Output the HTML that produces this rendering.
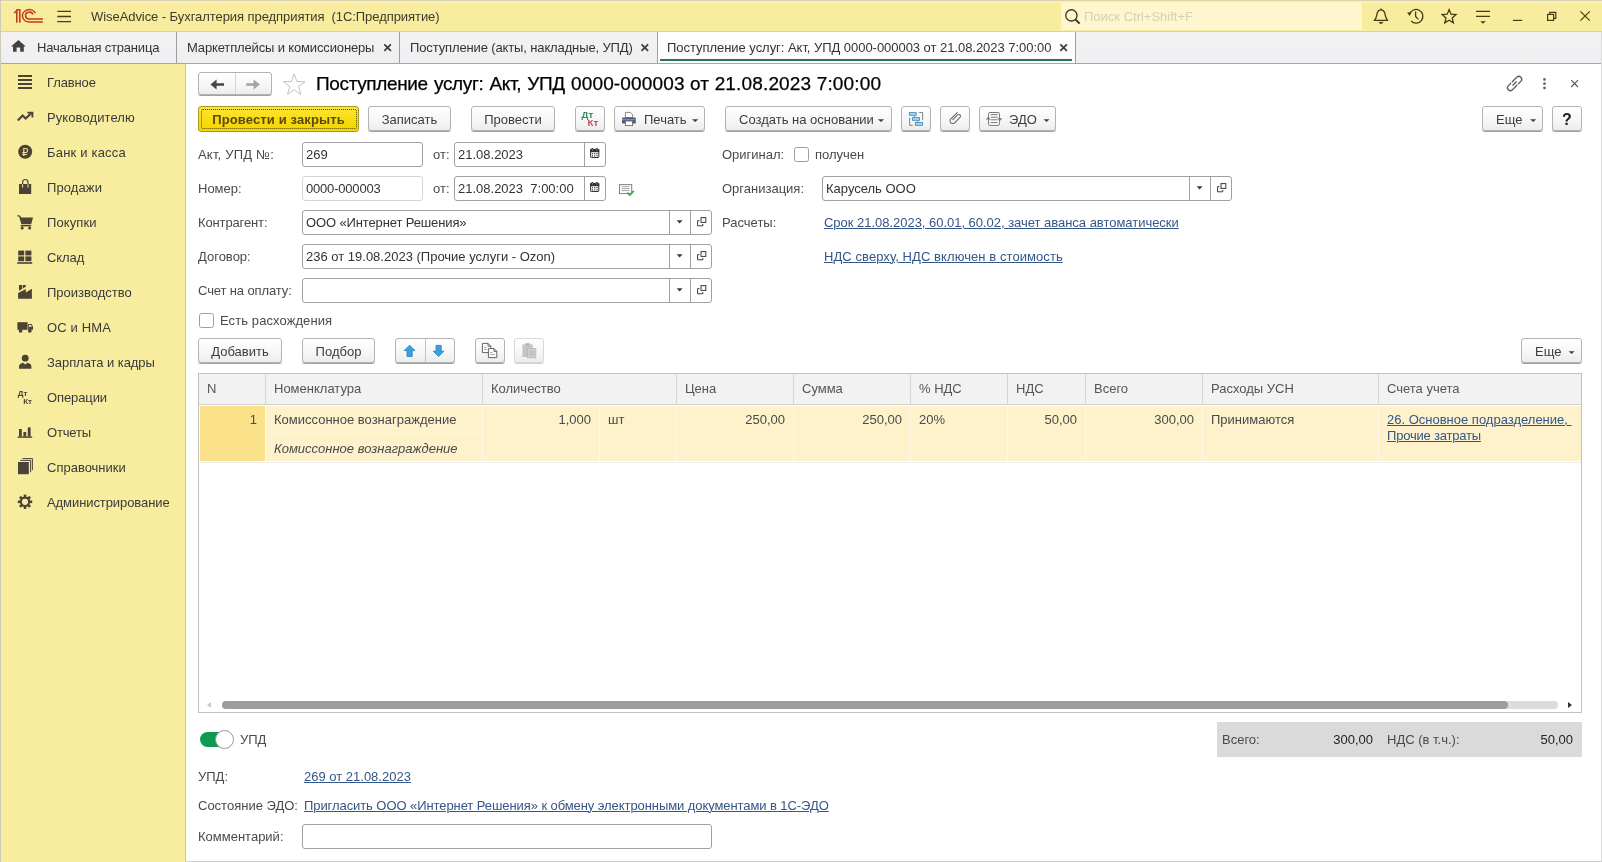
<!DOCTYPE html>
<html lang="ru">
<head>
<meta charset="utf-8">
<title>WiseAdvice - Бухгалтерия предприятия (1С:Предприятие)</title>
<style>
*{box-sizing:border-box;margin:0;padding:0}
html,body{width:1602px;height:862px;overflow:hidden;background:#fff}
body{font-family:"Liberation Sans",Arial,sans-serif;font-size:13px;color:#333;position:relative;will-change:transform}
.abs{position:absolute}
.t{position:absolute;white-space:nowrap;line-height:16px;height:16px}
svg{position:absolute;overflow:visible}
/* title bar */
#titlebar{position:absolute;left:0;top:0;width:1602px;height:31px;background:#f8ec9f;border-top:1px solid #f3e9b4}
#search{position:absolute;left:1061px;top:3px;width:301px;height:27px;background:#fdf6cf}
/* tabs */
#tabbar{position:absolute;left:0;top:31px;width:1602px;height:33px;background:linear-gradient(#f4f1f1,#efeff1);border-top:1px solid #d9d3ad;border-bottom:1px solid #a6a6a6}
.tabsep{position:absolute;top:32px;width:1px;height:31px;background:#9e9e9e}
/* sidebar */
#sidebar{position:absolute;left:0;top:64px;width:185px;height:798px;background:#f8ec9f;border-left:1px solid #d9d09a}
#sideedge{position:absolute;left:185px;top:64px;width:1px;height:798px;background:#cfc792}
.nav{position:absolute;left:47px;white-space:nowrap;line-height:16px;color:#3a3a3a}
/* buttons */
.btn{position:absolute;height:25px;border:1px solid #b3b3b3;border-radius:3px;background:linear-gradient(#ffffff,#f5f5f5 65%,#ececec);box-shadow:0 1px 0 #a2a2a2;text-align:center;line-height:25px;white-space:nowrap;color:#3c3c3c}
.inp{position:absolute;height:25px;border:1px solid #a0a0a0;border-radius:3px;background:#fff;line-height:23px;padding-left:3px;white-space:nowrap;color:#333}
.inp.ro{border-color:#d5d5d5}
.lbl{position:absolute;white-space:nowrap;line-height:16px;color:#4a4a4a}
.lnk{position:absolute;white-space:nowrap;line-height:16px;color:#355689;text-decoration:underline;text-underline-offset:1.4px;text-decoration-thickness:1px}
.colsep{top:374px;width:1px;height:87px;background:linear-gradient(#d4d4d4 0,#d4d4d4 30px,#cfcfcf 30px,#cfcfcf 31px,#fff 31px,#fff 32px,#fff9e4 32px)}
.th{color:#555}
.cb{position:absolute;width:15px;height:15px;border:1px solid #9e9e9e;border-radius:2.5px;background:#fff}
</style>
</head>
<body>
<!-- ===== TITLE BAR ===== -->
<div id="titlebar"></div>
<div id="search"></div>
<div class="t" style="left:91px;top:9px;font-size:13px;color:#3d3a2a;letter-spacing:-0.065px">WiseAdvice - Бухгалтерия предприятия&nbsp; (1С:Предприятие)</div>
<div class="t" style="left:1084px;top:9px;font-size:13px;color:#d6d1b6">Поиск Ctrl+Shift+F</div>

<div class="abs" style="left:0;top:0;width:1602px;height:1px;background:#d8d2ae"></div>
<div class="abs" style="left:0;top:1px;width:1602px;height:2px;background:#fbf1b2"></div>
<!-- ===== TAB BAR ===== -->
<div id="tabbar"></div>
<div class="abs" style="left:658px;top:32px;width:417px;height:31px;background:#fdfdfd"></div>
<div class="tabsep" style="left:176px"></div>
<div class="tabsep" style="left:399px"></div>
<div class="tabsep" style="left:657px"></div>
<div class="tabsep" style="left:1075px"></div>
<div class="abs" style="left:660px;top:59px;width:412px;height:2px;background:#2a7556"></div>
<div class="t" style="left:37px;top:40px;color:#333;letter-spacing:-0.2px">Начальная страница</div>
<div class="t" style="left:187px;top:40px;color:#333;letter-spacing:-0.145px">Маркетплейсы и комиссионеры</div>
<div class="t" style="left:410px;top:40px;color:#333;letter-spacing:-0.13px">Поступление (акты, накладные, УПД)</div>
<div class="t" style="left:667px;top:40px;color:#333;letter-spacing:-0.04px">Поступление услуг: Акт, УПД 0000-000003 от 21.08.2023 7:00:00</div>

<!-- ===== SIDEBAR ===== -->
<div id="sidebar"></div>
<div id="sideedge"></div>
<div class="nav" style="top:75px;letter-spacing:-0.12px">Главное</div>
<div class="nav" style="top:110px;letter-spacing:0.09px">Руководителю</div>
<div class="nav" style="top:145px;letter-spacing:0.2px">Банк и касса</div>
<div class="nav" style="top:180px;letter-spacing:0.1px">Продажи</div>
<div class="nav" style="top:215px;letter-spacing:0.11px">Покупки</div>
<div class="nav" style="top:250px;letter-spacing:-0.09px">Склад</div>
<div class="nav" style="top:285px">Производство</div>
<div class="nav" style="top:320px;letter-spacing:0.16px">ОС и НМА</div>
<div class="nav" style="top:355px;letter-spacing:-0.06px">Зарплата и кадры</div>
<div class="nav" style="top:390px;letter-spacing:-0.1px">Операции</div>
<div class="nav" style="top:425px;letter-spacing:-0.19px">Отчеты</div>
<div class="nav" style="top:460px">Справочники</div>
<div class="nav" style="top:495px;letter-spacing:-0.08px">Администрирование</div>

<div class="abs" style="left:1601px;top:32px;width:1px;height:830px;background:#dcdcdc"></div>
<div class="abs" style="left:186px;top:861px;width:1416px;height:1px;background:#cfcfcf"></div>
<!-- ===== MAIN ===== -->
<!-- header -->
<div class="btn" style="left:198px;top:72px;width:74px;height:23px"></div>
<div class="abs" style="left:235px;top:73px;width:1px;height:21px;background:#d4d4d4"></div>
<div class="t" style="left:316px;top:72px;font-size:19px;line-height:24px;height:24px;color:#000;-webkit-text-stroke:0.25px #000"><span style="letter-spacing:-0.36px;word-spacing:1.24px">Поступление услуг: Акт, УПД </span><span style="letter-spacing:0.15px">0000-000003 от 21.08.2023 7:00:00</span></div>

<!-- toolbar -->
<div class="btn" style="left:198px;top:106px;width:161px;height:26px;background:linear-gradient(#fbe53a,#f9dd10 50%,#f3d302);border-color:#a99b1e;box-shadow:none;font-weight:bold;color:#574a10;letter-spacing:0.125px">Провести и закрыть</div>
<div class="abs" style="left:201px;top:109px;width:156px;height:20px;border:1px dotted #4e450c;border-radius:2px"></div>
<div class="btn" style="left:368px;top:106px;width:83px">Записать</div>
<div class="btn" style="left:471px;top:106px;width:84px">Провести</div>
<div class="btn" style="left:575px;top:106px;width:30px"></div>
<div class="btn" style="left:614px;top:106px;width:91px;text-align:left;padding-left:29px">Печать</div>
<div class="btn" style="left:725px;top:106px;width:167px;text-align:left;padding-left:13px">Создать на основании</div>
<div class="btn" style="left:901px;top:106px;width:30px"></div>
<div class="btn" style="left:940px;top:106px;width:30px"></div>
<div class="btn" style="left:979px;top:106px;width:77px;text-align:left;padding-left:29px">ЭДО</div>
<div class="btn" style="left:1482px;top:106px;width:61px;text-align:left;padding-left:13px">Еще</div>
<div class="btn" style="left:1552px;top:106px;width:30px;font-weight:bold;font-size:16px;color:#1c1c1c">?</div>

<!-- form left -->
<div class="lbl" style="left:198px;top:147px;letter-spacing:0.2px">Акт, УПД №:</div>
<div class="inp" style="left:302px;top:142px;width:121px">269</div>
<div class="lbl" style="left:433px;top:147px">от:</div>
<div class="inp" style="left:454px;top:142px;width:152px">21.08.2023</div>
<div class="abs" style="left:584px;top:143px;width:1px;height:23px;background:#a0a0a0"></div>

<div class="lbl" style="left:198px;top:181px">Номер:</div>
<div class="inp ro" style="left:302px;top:176px;width:121px;letter-spacing:-0.195px">0000-000003</div>
<div class="lbl" style="left:433px;top:181px">от:</div>
<div class="inp" style="left:454px;top:176px;width:152px">21.08.2023&nbsp; 7:00:00</div>
<div class="abs" style="left:584px;top:177px;width:1px;height:23px;background:#a0a0a0"></div>

<div class="lbl" style="left:198px;top:215px;letter-spacing:-0.13px">Контрагент:</div>
<div class="inp" style="left:302px;top:210px;width:410px;letter-spacing:-0.128px">ООО «Интернет Решения»</div>
<div class="abs" style="left:669px;top:211px;width:1px;height:23px;background:#a0a0a0"></div>
<div class="abs" style="left:690px;top:211px;width:1px;height:23px;background:#a0a0a0"></div>

<div class="lbl" style="left:198px;top:249px">Договор:</div>
<div class="inp" style="left:302px;top:244px;width:410px">236 от 19.08.2023 (Прочие услуги - Ozon)</div>
<div class="abs" style="left:669px;top:245px;width:1px;height:23px;background:#a0a0a0"></div>
<div class="abs" style="left:690px;top:245px;width:1px;height:23px;background:#a0a0a0"></div>

<div class="lbl" style="left:198px;top:283px;letter-spacing:-0.115px">Счет на оплату:</div>
<div class="inp" style="left:302px;top:278px;width:410px"></div>
<div class="abs" style="left:669px;top:279px;width:1px;height:23px;background:#a0a0a0"></div>
<div class="abs" style="left:690px;top:279px;width:1px;height:23px;background:#a0a0a0"></div>

<div class="cb" style="left:199px;top:313px"></div>
<div class="lbl" style="left:220px;top:313px;letter-spacing:0.09px">Есть расхождения</div>

<!-- form right -->
<div class="lbl" style="left:722px;top:147px">Оригинал:</div>
<div class="cb" style="left:794px;top:147px"></div>
<div class="lbl" style="left:815px;top:147px">получен</div>
<div class="lbl" style="left:722px;top:181px">Организация:</div>
<div class="inp" style="left:822px;top:176px;width:410px">Карусель ООО</div>
<div class="abs" style="left:1189px;top:177px;width:1px;height:23px;background:#a0a0a0"></div>
<div class="abs" style="left:1210px;top:177px;width:1px;height:23px;background:#a0a0a0"></div>
<div class="lbl" style="left:722px;top:215px">Расчеты:</div>
<div class="lnk" style="left:824px;top:215px;letter-spacing:-0.025px">Срок 21.08.2023, 60.01, 60.02, зачет аванса автоматически</div>
<div class="lnk" style="left:824px;top:249px;letter-spacing:0.075px">НДС сверху, НДС включен в стоимость</div>
<!-- table toolbar -->
<div class="btn" style="left:198px;top:338px;width:84px">Добавить</div>
<div class="btn" style="left:302px;top:338px;width:73px">Подбор</div>
<div class="btn" style="left:395px;top:338px;width:60px"></div>
<div class="abs" style="left:425px;top:339px;width:1px;height:23px;background:#c4c4c4"></div>
<div class="btn" style="left:475px;top:338px;width:30px"></div>
<div class="btn" style="left:514px;top:338px;width:30px;border-color:#d8d8d8;box-shadow:0 1px 0 #d0d0d0"></div>
<div class="btn" style="left:1521px;top:338px;width:61px;text-align:left;padding-left:13px">Еще</div>

<!-- table -->
<div class="abs" style="left:198px;top:373px;width:1384px;height:340px;border:1px solid #c3c3c3;background:#fff"></div>
<div class="abs" style="left:199px;top:374px;width:1382px;height:30px;background:#f2f2f2"></div>
<div class="abs" style="left:199px;top:404px;width:1382px;height:1px;background:#cfcfcf"></div>
<div class="abs" style="left:200px;top:406px;width:1381px;height:55px;background:#fdf2cc"></div>
<div class="abs" style="left:200px;top:406px;width:65px;height:55px;background:#fbe28a"></div>
<div class="abs" style="left:199px;top:462px;width:1382px;height:1px;background:#ededed"></div>
<div class="abs" style="left:266px;top:433px;width:216px;height:1px;background:#fef7dd"></div>
<!-- col separators -->
<div class="abs colsep" style="left:265px"></div>
<div class="abs colsep" style="left:482px"></div>
<div class="abs colsep" style="left:676px"></div>
<div class="abs colsep" style="left:793px"></div>
<div class="abs colsep" style="left:910px"></div>
<div class="abs colsep" style="left:1007px"></div>
<div class="abs colsep" style="left:1085px"></div>
<div class="abs colsep" style="left:1202px"></div>
<div class="abs colsep" style="left:1378px"></div>
<div class="abs" style="left:599px;top:406px;width:1px;height:55px;background:#fff9e4"></div>
<!-- header labels -->
<div class="lbl th" style="left:207px;top:381px">N</div>
<div class="lbl th" style="left:274px;top:381px">Номенклатура</div>
<div class="lbl th" style="left:491px;top:381px">Количество</div>
<div class="lbl th" style="left:685px;top:381px">Цена</div>
<div class="lbl th" style="left:802px;top:381px">Сумма</div>
<div class="lbl th" style="left:919px;top:381px">% НДС</div>
<div class="lbl th" style="left:1016px;top:381px">НДС</div>
<div class="lbl th" style="left:1094px;top:381px">Всего</div>
<div class="lbl th" style="left:1211px;top:381px">Расходы УСН</div>
<div class="lbl th" style="left:1387px;top:381px">Счета учета</div>
<!-- row -->
<div class="lbl td" style="left:199px;width:58px;text-align:right;top:412px">1</div>
<div class="lbl td" style="left:274px;top:412px">Комиссонное вознаграждение</div>
<div class="lbl td" style="left:274px;top:441px;font-style:italic">Комиссонное вознаграждение</div>
<div class="lbl td" style="left:483px;width:108px;text-align:right;top:412px">1,000</div>
<div class="lbl td" style="left:608px;top:412px">шт</div>
<div class="lbl td" style="left:678px;width:107px;text-align:right;top:412px">250,00</div>
<div class="lbl td" style="left:795px;width:107px;text-align:right;top:412px">250,00</div>
<div class="lbl td" style="left:919px;top:412px">20%</div>
<div class="lbl td" style="left:1008px;width:69px;text-align:right;top:412px">50,00</div>
<div class="lbl td" style="left:1086px;width:108px;text-align:right;top:412px">300,00</div>
<div class="lbl td" style="left:1211px;top:412px">Принимаются</div>
<div class="lnk" style="left:1387px;top:412px">26. Основное подразделение,&nbsp;</div>
<div class="lnk" style="left:1387px;top:428px;letter-spacing:-0.2px">Прочие затраты</div>
<!-- scrollbar -->
<div class="abs" style="left:222px;top:701px;width:1336px;height:8px;border-radius:4px;background:#dcdcdc"></div>
<div class="abs" style="left:222px;top:701px;width:1286px;height:8px;border-radius:4px;background:#9d9d9d"></div>
<div class="abs" style="left:207px;top:702px;width:0;height:0;border:3px solid transparent;border-right:4px solid #c9c9c9;border-left:0"></div>
<div class="abs" style="left:1568px;top:702px;width:0;height:0;border:3px solid transparent;border-left:4px solid #333;border-right:0"></div>

<!-- footer -->
<div class="abs" style="left:200px;top:732px;width:32px;height:15px;border-radius:8px;background:#0f9a52"></div>
<div class="abs" style="left:215px;top:730px;width:19px;height:19px;border-radius:10px;background:#fff;border:1px solid #9a9a9a"></div>
<div class="lbl" style="left:240px;top:732px">УПД</div>
<div class="abs" style="left:1217px;top:722px;width:365px;height:35px;background:#dadada"></div>
<div class="lbl" style="left:1222px;top:732px">Всего:</div>
<div class="lbl" style="left:1300px;width:73px;text-align:right;top:732px;color:#222">300,00</div>
<div class="lbl" style="left:1387px;top:732px">НДС (в т.ч.):</div>
<div class="lbl" style="left:1500px;width:73px;text-align:right;top:732px;color:#222">50,00</div>

<div class="lbl" style="left:198px;top:769px">УПД:</div>
<div class="lnk" style="left:304px;top:769px">269 от 21.08.2023</div>
<div class="lbl" style="left:198px;top:798px">Состояние ЭДО:</div>
<div class="lnk" style="left:304px;top:798px;letter-spacing:-0.078px">Пригласить ООО «Интернет Решения» к обмену электронными документами в 1С-ЭДО</div>
<div class="lbl" style="left:198px;top:829px">Комментарий:</div>
<div class="inp" style="left:302px;top:824px;width:410px;height:25px"></div>


<svg id="ico" width="1602" height="862" viewBox="0 0 1602 862" style="left:0;top:0;pointer-events:none">
<!-- 1C logo -->
<g fill="none" stroke="#c43a1b" stroke-width="1.6" stroke-linecap="butt">
  <path d="M14.2 13 L16.8 10.6 V22.7"/>
  <path d="M16.4 9.8 H19.8 V22.7"/>
  <path d="M35.4 13.2 A6.8 6.2 0 1 0 29.6 22 H42.9"/>
  <path d="M33 14.6 A3.8 3.45 0 1 0 29.7 19 H42.9"/>
</g>
<!-- hamburger title -->
<g stroke="#4a3f12" stroke-width="1.3">
  <path d="M57.3 11.4H71M57.3 16.5H71M57.3 21.6H71"/>
</g>
<!-- search icon -->
<g fill="none" stroke="#3e3720" stroke-width="1.35">
  <circle cx="1071.4" cy="15.4" r="5.6"/>
  <path d="M1075.6 19.6L1079.6 23.6" stroke-width="2"/>
</g>
<!-- bell -->
<g fill="none" stroke="#453c12" stroke-width="1.3" stroke-linejoin="round">
  <path d="M1374.3 20.3 H1387.7 C1385.2 18.6 1385.6 15 1384.6 12.6 C1383.9 10.6 1382.6 9.8 1381 9.8 C1379.4 9.8 1378.1 10.6 1377.4 12.6 C1376.4 15 1376.8 18.6 1374.3 20.3Z"/>
  <path d="M1378.8 22.3 H1383.2 L1381 23.9Z" fill="#453c12" stroke-width="0.6"/>
  <path d="M1381 8.6V9.8"/>
</g>
<!-- history -->
<g fill="none" stroke="#453c12" stroke-width="1.3">
  <path d="M1409.6 14.2 A6.8 6.8 0 1 1 1411.2 21"/>
  <path d="M1415.6 11.4 V16.4 L1418.4 19.4"/>
  <path d="M1407.2 12.2 L1411.6 12.6 L1409.4 16Z" fill="#453c12" stroke="none"/>
</g>
<!-- star -->
<path d="M1449.1 9.6 L1451.0 14.2 L1456.0 14.6 L1452.2 17.9 L1453.4 22.8 L1449.1 20.2 L1444.8 22.8 L1446.0 17.9 L1442.2 14.6 L1447.2 14.2Z" fill="none" stroke="#453c12" stroke-width="1.3" stroke-linejoin="miter"/>
<!-- filter lines -->
<g stroke="#453c12" stroke-width="1.3"><path d="M1476 11.4H1490M1476 16.4H1490"/></g>
<path d="M1480.2 21.2H1485.8L1483 23.8Z" fill="#453c12"/>
<!-- window controls -->
<g fill="none" stroke="#453c12" stroke-width="1.2">
  <path d="M1513 20.4H1522.2"/>
  <rect x="1547.6" y="14.4" width="6" height="6"/>
  <path d="M1549.8 14.4V12.4H1555.8V18.4H1553.6"/>
  <path d="M1580.4 11.4L1589.8 20.6M1589.8 11.4L1580.4 20.6"/>
</g>
<!-- home icon -->
<path d="M18.4 40 L25.8 46.4 H23.8 V51.8 H20.2 V47.6 H16.6 V51.8 H13 V46.4 H11 Z" fill="#424242"/>
<!-- tab close x -->
<g stroke="#3c3c3c" stroke-width="1.7" fill="none">
  <path d="M384.3 44.3L390.9 50.9M390.9 44.3L384.3 50.9"/>
  <path d="M641.5 44.3L648.1 50.9M648.1 44.3L641.5 50.9"/>
  <path d="M1060.3 44.3L1066.9 50.9M1066.9 44.3L1060.3 50.9"/>
</g>
<!-- ===== sidebar icons ===== -->
<g fill="#4a4336">
  <!-- main: 4 lines -->
  <rect x="18" y="75" width="14" height="2"/><rect x="18" y="79" width="14" height="2"/><rect x="18" y="83" width="14" height="2"/><rect x="18" y="87" width="14" height="2"/>
  <!-- ruble -->
  <circle cx="25.2" cy="151.8" r="7"/>
  <!-- bag -->
  <path d="M19 184H31.2V194H19Z"/>
  <!-- cart -->
  <path d="M19.4 217.4H33L31.2 224.2H21.4Z"/>
  <rect x="20.6" y="225" width="10.6" height="1.4"/>
  <circle cx="22.2" cy="228" r="1.5"/><circle cx="29.6" cy="228" r="1.5"/>
  <!-- warehouse -->
  <rect x="18.2" y="250.6" width="6" height="4.8"/><rect x="25.4" y="250.6" width="6" height="4.8"/>
  <rect x="18.2" y="256.4" width="6" height="4.8"/><rect x="25.4" y="256.4" width="6" height="4.8"/>
  <rect x="17.2" y="262.2" width="15" height="1.6"/>
  <!-- factory -->
  <path d="M18.1 298.8V293L25.8 289V292.6L31.9 288.7V298.8Z"/>
  <path d="M19 285H22.3V288.8L19 290.8Z"/><path d="M23 285H25.9V286.4L23 288.4Z"/>
  <!-- truck -->
  <path d="M17.4 322.2H27.6V329.8H17.4Z"/>
  <path d="M28.2 324H31.4L33 326.6V329.8H28.2Z"/>
  <circle cx="20.6" cy="330.8" r="1.9"/><circle cx="29.8" cy="330.8" r="1.9"/>
  <!-- person -->
  <circle cx="25.2" cy="358.2" r="3.4"/>
  <path d="M19 368.8V366.4C19 364.4 21 363.4 23 362.8L25.2 364.4L27.4 362.8C29.4 363.4 31.4 364.4 31.4 366.4V368.8Z"/>
  <!-- bar chart -->
  <rect x="17.6" y="436.4" width="14.6" height="1.4"/>
  <rect x="19" y="429" width="2.8" height="7.6"/><rect x="23.4" y="432" width="2.8" height="4.6"/><rect x="27.8" y="427.4" width="2.8" height="9.2"/>
  <!-- books -->
  <rect x="18" y="462" width="10.8" height="12.2"/>
</g>
<g fill="none" stroke="#4a4336">
  <!-- trend -->
  <path d="M17.8 120.4L22.6 115.6L25.6 118.6L31.2 113.2" stroke-width="2.1"/>
  <path d="M27.4 112.6H32.4V117.6" stroke-width="1.9"/>
  <!-- bag handle -->
  <path d="M22.6 186.6V182.4A2.6 2.8 0 0 1 28 182.4V186.6" stroke-width="1.2"/>
  <!-- cart handle -->
  <path d="M17.4 215.6L19.8 216.2L20.6 218" stroke-width="1.3"/>
  <!-- books offset -->
  <path d="M20.2 460.4H30.6V472.2" stroke-width="1"/>
  <path d="M22.4 458.6H32.4V470.2" stroke-width="1"/>
</g>
<!-- bag inner handle (yellow) -->
<path d="M22.6 184.2V187.6M28 184.2V187.6" stroke="#f8ec9f" stroke-width="1" fill="none"/>
<!-- truck window -->
<path d="M29 325H31L32 326.8H29Z" fill="#f8ec9f"/>
<!-- ruble glyph -->
<text x="25.3" y="155.6" font-family="'DejaVu Sans','Liberation Sans',sans-serif" font-size="10" fill="#f8ec9f" text-anchor="middle">₽</text>
<!-- DtKt sidebar -->
<text x="17.8" y="396.4" font-family="'Liberation Sans',sans-serif" font-size="8" font-weight="bold" fill="#4a4336">Дт</text>
<text x="23.2" y="404.2" font-family="'Liberation Sans',sans-serif" font-size="8" font-weight="bold" fill="#4a4336">Кт</text>
<!-- gear -->
<g transform="translate(25 501.8)">
  <g fill="#4a4336">
    <rect x="-1.3" y="-7.2" width="2.6" height="14.4"/>
    <rect x="-1.3" y="-7.2" width="2.6" height="14.4" transform="rotate(45)"/>
    <rect x="-1.3" y="-7.2" width="2.6" height="14.4" transform="rotate(90)"/>
    <rect x="-1.3" y="-7.2" width="2.6" height="14.4" transform="rotate(135)"/>
    <circle r="5.2"/>
  </g>
  <circle r="3.1" fill="#f8ec9f"/>
</g>
<!-- ===== header nav arrows ===== -->
<path d="M210.4 84.5L216.6 79.4V83.2H224V85.8H216.6V89.6Z" fill="#474747"/>
<path d="M259.8 84.5L253.6 79.4V83.2H246.2V85.8H253.6V89.6Z" fill="#a3a3a3"/>
<!-- favorite star -->
<path d="M294.2 73.8 L296.9 81.5 L305.0 81.7 L298.6 86.6 L300.9 94.4 L294.2 89.8 L287.5 94.4 L289.8 86.6 L283.4 81.7 L291.5 81.5Z" fill="#fff" stroke="#c2c2c2" stroke-width="1"/>
<!-- link icon -->
<g transform="translate(1514.6 83.5) rotate(-45)" fill="none" stroke="#595959" stroke-width="1.25" stroke-linecap="round">
  <path d="M-0.4 -2.9H5.9A2.9 2.9 0 0 1 5.9 2.9H2.6"/>
  <path d="M0.4 2.9H-5.9A2.9 2.9 0 0 1 -5.9 -2.9H-2.6"/>
  <path d="M-2.4 0H2.4"/>
</g>
<!-- kebab -->
<g fill="#6a6a6a"><circle cx="1544.5" cy="79.4" r="1.4"/><circle cx="1544.5" cy="83.7" r="1.4"/><circle cx="1544.5" cy="88" r="1.4"/></g>
<!-- close form -->
<path d="M1571.2 80.2L1578 87M1578 80.2L1571.2 87" stroke="#555" stroke-width="1.1" fill="none"/>
<!-- DtKt toolbar -->
<text x="581.6" y="118.4" font-family="'Liberation Sans',sans-serif" font-size="9.6" font-weight="bold" fill="#2f8f5b">Дт</text>
<text x="587.6" y="125.8" font-family="'Liberation Sans',sans-serif" font-size="9.6" font-weight="bold" fill="#cf4460">Кт</text>
<!-- printer -->
<g>
  <path d="M625.4 117.6V112.4H630.4L632.6 114.6V117.6Z" fill="#fff" stroke="#7a7a7a" stroke-width="0.9"/>
  <rect x="622" y="117.4" width="13.8" height="6.2" rx="1.2" fill="#4b5d7e"/>
  <rect x="622" y="119.2" width="13.8" height="1" fill="#8d9bb6"/>
  <rect x="625.4" y="121" width="7.2" height="4.6" fill="#fff" stroke="#6b6b6b" stroke-width="0.9"/>
</g>
<!-- dropdown triangles on buttons -->
<g fill="#3f3f3f">
  <path d="M692 119.2H698.4L695.2 122Z"/>
  <path d="M877.8 119.2H884.2L881 122Z"/>
  <path d="M1043.6 119.2H1049.6L1046.6 122Z"/>
  <path d="M1530.2 119.2H1536.2L1533.2 122Z"/>
  <path d="M1568.6 351.2H1574.6L1571.6 354Z"/>
</g>
<!-- structure icon -->
<g>
  <path d="M909.6 117.8V125.3H912.8" fill="none" stroke="#6f7780" stroke-width="0.9"/>
  <path d="M919.2 112.5H922.6V120.2" fill="none" stroke="#6f7780" stroke-width="0.9"/>
  <path d="M914.6 115.4V117.4M917.8 120.4V122.2" fill="none" stroke="#5a8fb0" stroke-width="0.9"/>
  <rect x="909.4" y="112.6" width="6.8" height="2.7" fill="#a9d5ee" stroke="#4b8fb8" stroke-width="0.9"/>
  <rect x="912.5" y="117.6" width="7" height="2.7" fill="#a9d5ee" stroke="#4b8fb8" stroke-width="0.9"/>
  <rect x="915.5" y="122.5" width="7" height="2.8" fill="#a9d5ee" stroke="#4b8fb8" stroke-width="0.9"/>
</g>
<!-- paper clip -->
<g transform="translate(955.2 118.4) rotate(45)">
  <path d="M-2.7 -5.6V3.5A2.7 2.7 0 0 0 2.7 3.5V-4.1A1.75 1.75 0 0 0 -0.8 -4.1V2.6" fill="none" stroke="#676767" stroke-width="1.05" stroke-linecap="round"/>
</g>
<!-- EDO icon -->
<g fill="none" stroke="#777" stroke-width="1">
  <rect x="988.6" y="112.5" width="10.8" height="12.9" rx="1.2" fill="#fff"/>
  <path d="M990.6 114.6H997.6M990.6 117.2H997.6M990.6 119.8H997.6M990.6 122.6H997.6"/>
</g>
<path d="M985.8 119.6L988.2 116.8L990.6 119.6Z" fill="#777"/>
<path d="M997.4 118.2L999.9 121L1002.4 118.2Z" fill="#777"/>
<!-- calendar icons -->
<g id="cal1">
  <rect x="590.6" y="149.4" width="8.2" height="8.1" rx="0.6" fill="#fff" stroke="#333" stroke-width="1"/>
  <rect x="590.2" y="149" width="9" height="3.2" fill="#333"/>
  <path d="M592.4 148.1V150M596.9 148.1V150" stroke="#333" stroke-width="1.5"/>
  <path d="M592.4 149.2V150.4M596.9 149.2V150.4" stroke="#e8e8e8" stroke-width="0.6"/>
  <g fill="#333"><rect x="591.8" y="153.1" width="1.2" height="1.2"/><rect x="594.1" y="153.1" width="1.2" height="1.2"/><rect x="596.4" y="153.1" width="1.2" height="1.2"/><rect x="591.8" y="155.3" width="1.2" height="1.2"/><rect x="594.1" y="155.3" width="1.2" height="1.2"/><rect x="596.4" y="155.3" width="1.2" height="1.2"/></g>
</g>
<use href="#cal1" y="34"/>
<!-- green-check doc icon -->
<g>
  <rect x="619.5" y="184.6" width="12.2" height="9" fill="#fff" stroke="#808080" stroke-width="1"/>
  <path d="M621.6 186.6H629.6M621.6 188.6H629.6M621.6 190.6H629.6" stroke="#9a9a9a" stroke-width="0.9"/>
  <path d="M627.4 192.6L629.8 195L633.8 190.8" fill="none" stroke="#36a853" stroke-width="1.8"/>
</g>
<!-- field dropdown triangles + open icons -->
<g id="dd1">
  <path d="M676.6 220.2H682.6L679.6 223.4Z" fill="#3a3a3a"/>
  <g fill="none" stroke="#3a3a3a" stroke-width="1">
    <rect x="701" y="217.6" width="4.8" height="4.8"/>
    <path d="M699.4 220.6H697.6V225.8H702.8V224"/>
  </g>
</g>
<use href="#dd1" y="34"/>
<use href="#dd1" y="68"/>
<use href="#dd1" x="520" y="-34"/>
<!-- up / down arrows -->
<path d="M409.6 345.2L415 350.6H412.2V356.4H407V350.6H404.2Z" fill="#3d9ee0" stroke="#2a7fc0" stroke-width="0.8" stroke-linejoin="round"/>
<path d="M438.6 356.6L444 351.2H441.2V345.4H436V351.2H433.2Z" fill="#3d9ee0" stroke="#2a7fc0" stroke-width="0.8" stroke-linejoin="round"/>
<!-- copy icon -->
<g fill="#fff" stroke="#555" stroke-width="0.9">
  <path d="M482.4 343.4H488L490.8 346.2V352.6H482.4Z"/>
  <path d="M488 343.4V346.2H490.8" fill="none"/>
  <path d="M488.4 348.6H494L496.8 351.4V357.6H488.4Z"/>
  <path d="M494 348.6V351.4H496.8" fill="none"/>
</g>
<path d="M484 347.4H486.4M484 349.4H487M490.2 352.6H492.4M490.2 354.6H495" stroke="#8a8a8a" stroke-width="0.8"/>
<!-- paste icon (disabled) -->
<g>
  <rect x="522.4" y="344.4" width="10.4" height="12.6" fill="#c4c4c4"/>
  <rect x="525.4" y="343.2" width="4.4" height="2.2" fill="#b2b2b2"/>
  <rect x="527.6" y="348.4" width="8.2" height="9.4" fill="#cfcfcf" stroke="#b5b5b5" stroke-width="0.8"/>
  <path d="M529.2 351H534M529.2 353H534M529.2 355H534" stroke="#b0b0b0" stroke-width="0.8"/>
</g>

</svg>

<div class="abs" style="left:0;top:0;width:1px;height:862px;background:#cfcab2"></div>
</body>
</html>
